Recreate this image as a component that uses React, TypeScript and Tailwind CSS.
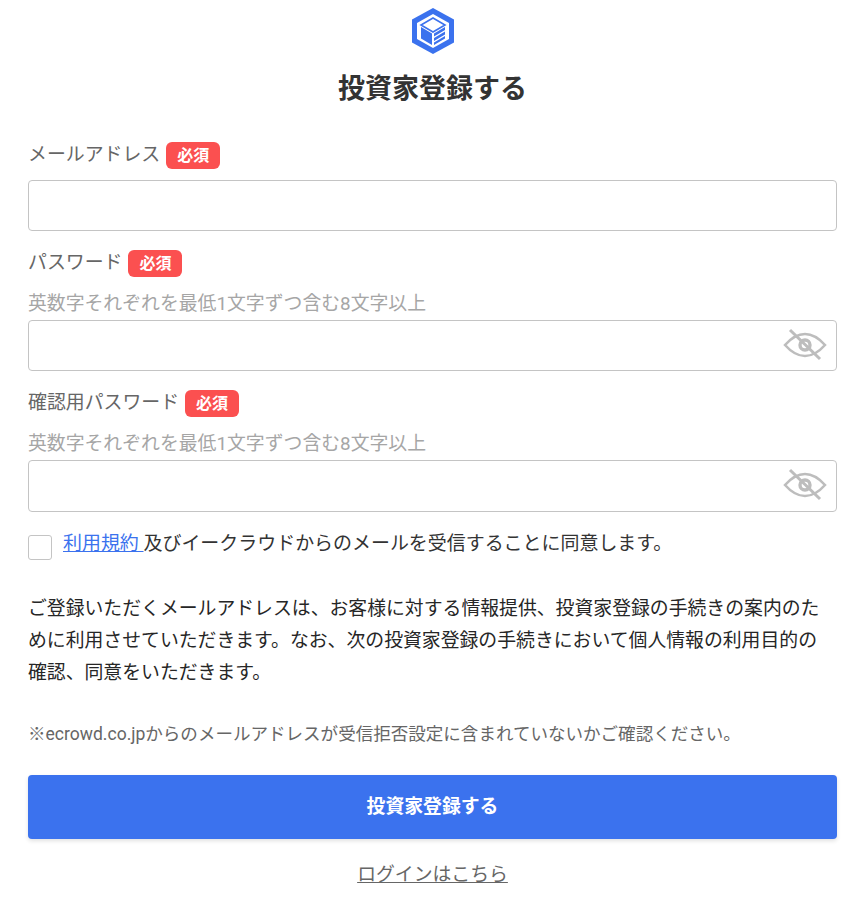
import React from 'react'

const fontStack = "font-['Roboto','Noto_Sans_CJK_JP',sans-serif]"

function Badge() {
  return <span className="ml-[6px] inline-flex h-[27px] w-[54px] items-center justify-center rounded-[6px] bg-[#fb5050] text-[16px] font-bold text-white">必須</span>
}

function EyeOff() {
  return (
    <svg width="44" height="36" viewBox="0 0 44 36" fill="none" stroke="#bdbdbd" className="absolute right-[9px] top-[6px]">
      <path d="M2 18 C10 9 17 7 22 7 C27 7 34 9 42 18 C34 27 27 29 22 29 C17 29 10 27 2 18 Z" strokeWidth="2.6" />
      <circle cx="22" cy="18" r="5" strokeWidth="3.4" />
      <path d="M7 3 L37 32" strokeWidth="3" />
    </svg>
  )
}

function Field({ label, hint, eye, inputClass }: { label: string; hint?: boolean; eye?: boolean; inputClass: string }) {
  return (
    <div>
      <div className="flex h-[27px] items-center">
        <span className="text-[18.9px] text-[#666666]">{label}</span>
        <Badge />
      </div>
      {hint && <p className="mt-[14px] h-[26px] text-[18.85px] leading-[27px] text-[#a6a6a6]">英数字それぞれを最低1文字ずつ含む8文字以上</p>}
      <div className={`relative rounded-[4px] border border-[#c4c4c4] bg-white ${hint ? 'mt-[3px]' : 'mt-[11px]'} ${inputClass}`}>
        {eye && <EyeOff />}
      </div>
    </div>
  )
}

export default function App() {
  return (
    <div className={`${fontStack} h-[901px] w-[868px] overflow-hidden bg-white pl-[28px] pr-[31px] pt-[8px]`}>
      <div className="flex justify-center">
        <svg width="42" height="46" viewBox="0 0 42 46">
          <path d="M21 0 L42 11.5 V34.5 L21 46 L0 34.5 V11.5 Z" fill="#3b72ee" />
          <path d="M21 6 L37 15 V31 L21 40 L5 31 V15 Z" fill="#fff" />
          <path d="M21 10 L33 17 L21 24 L9 17 Z" fill="#fff" stroke="#3b72ee" strokeWidth="1.6" />
          <path d="M9 19 L20 25.5 V37 L9 30.5 Z" fill="#3b72ee" />
          <path d="M22 25.5 L33 19 V22 L22 28.5 Z M22 30 L33 23.5 V26.5 L22 33 Z M22 34.5 L33 28 V30.5 L22 37 Z" fill="#3b72ee" />
        </svg>
      </div>
      <h1 className="mt-[16px] mb-[-1px] text-center text-[27px] leading-[38px] font-bold text-[#333333]">投資家登録する</h1>
      <div className="mt-[35px] flex flex-col gap-[19px]">
        <Field label="メールアドレス" inputClass="h-[51px]" />
        <Field label="パスワード" hint eye inputClass="h-[51px]" />
        <Field label="確認用パスワード" hint eye inputClass="h-[52px]" />
      </div>
      <div className="mt-[18px] flex items-start">
        <span className="mt-[5px] h-[25px] w-[24px] rounded-[3px] border border-[#c4c4c4]" />
        <p className="ml-[11px] text-[18.97px] leading-[27px] text-[#333333]">
          <a className="text-[#3b72ee] underline">利用規約 </a>及びイークラウドからのメールを受信することに同意します。
        </p>
      </div>
      <p className="mt-[33px] pr-[10px] text-[18.85px] leading-[32px] text-[#262626]">ご登録いただくメールアドレスは、お客様に対する情報提供、投資家登録の手続きの案内のために利用させていただきます。なお、次の投資家登録の手続きにおいて個人情報の利用目的の確認、同意をいただきます。</p>
      <p className="mt-[32px] text-[17.55px] leading-[27px] text-[#666666]">※ecrowd.co.jpからのメールアドレスが受信拒否設定に含まれていないかご確認ください。</p>
      <button className="mt-[27px] flex h-[64px] w-full items-center justify-center rounded-[4px] bg-[#3b72ee] text-[18.85px] font-bold text-white shadow-[0_2px_4px_rgba(0,0,0,0.12)]">投資家登録する</button>
      <div className="mt-[23px] text-center">
        <a className="text-[18.85px] leading-[27px] text-[#666666] underline">ログインはこちら</a>
      </div>
    </div>
  )
}
